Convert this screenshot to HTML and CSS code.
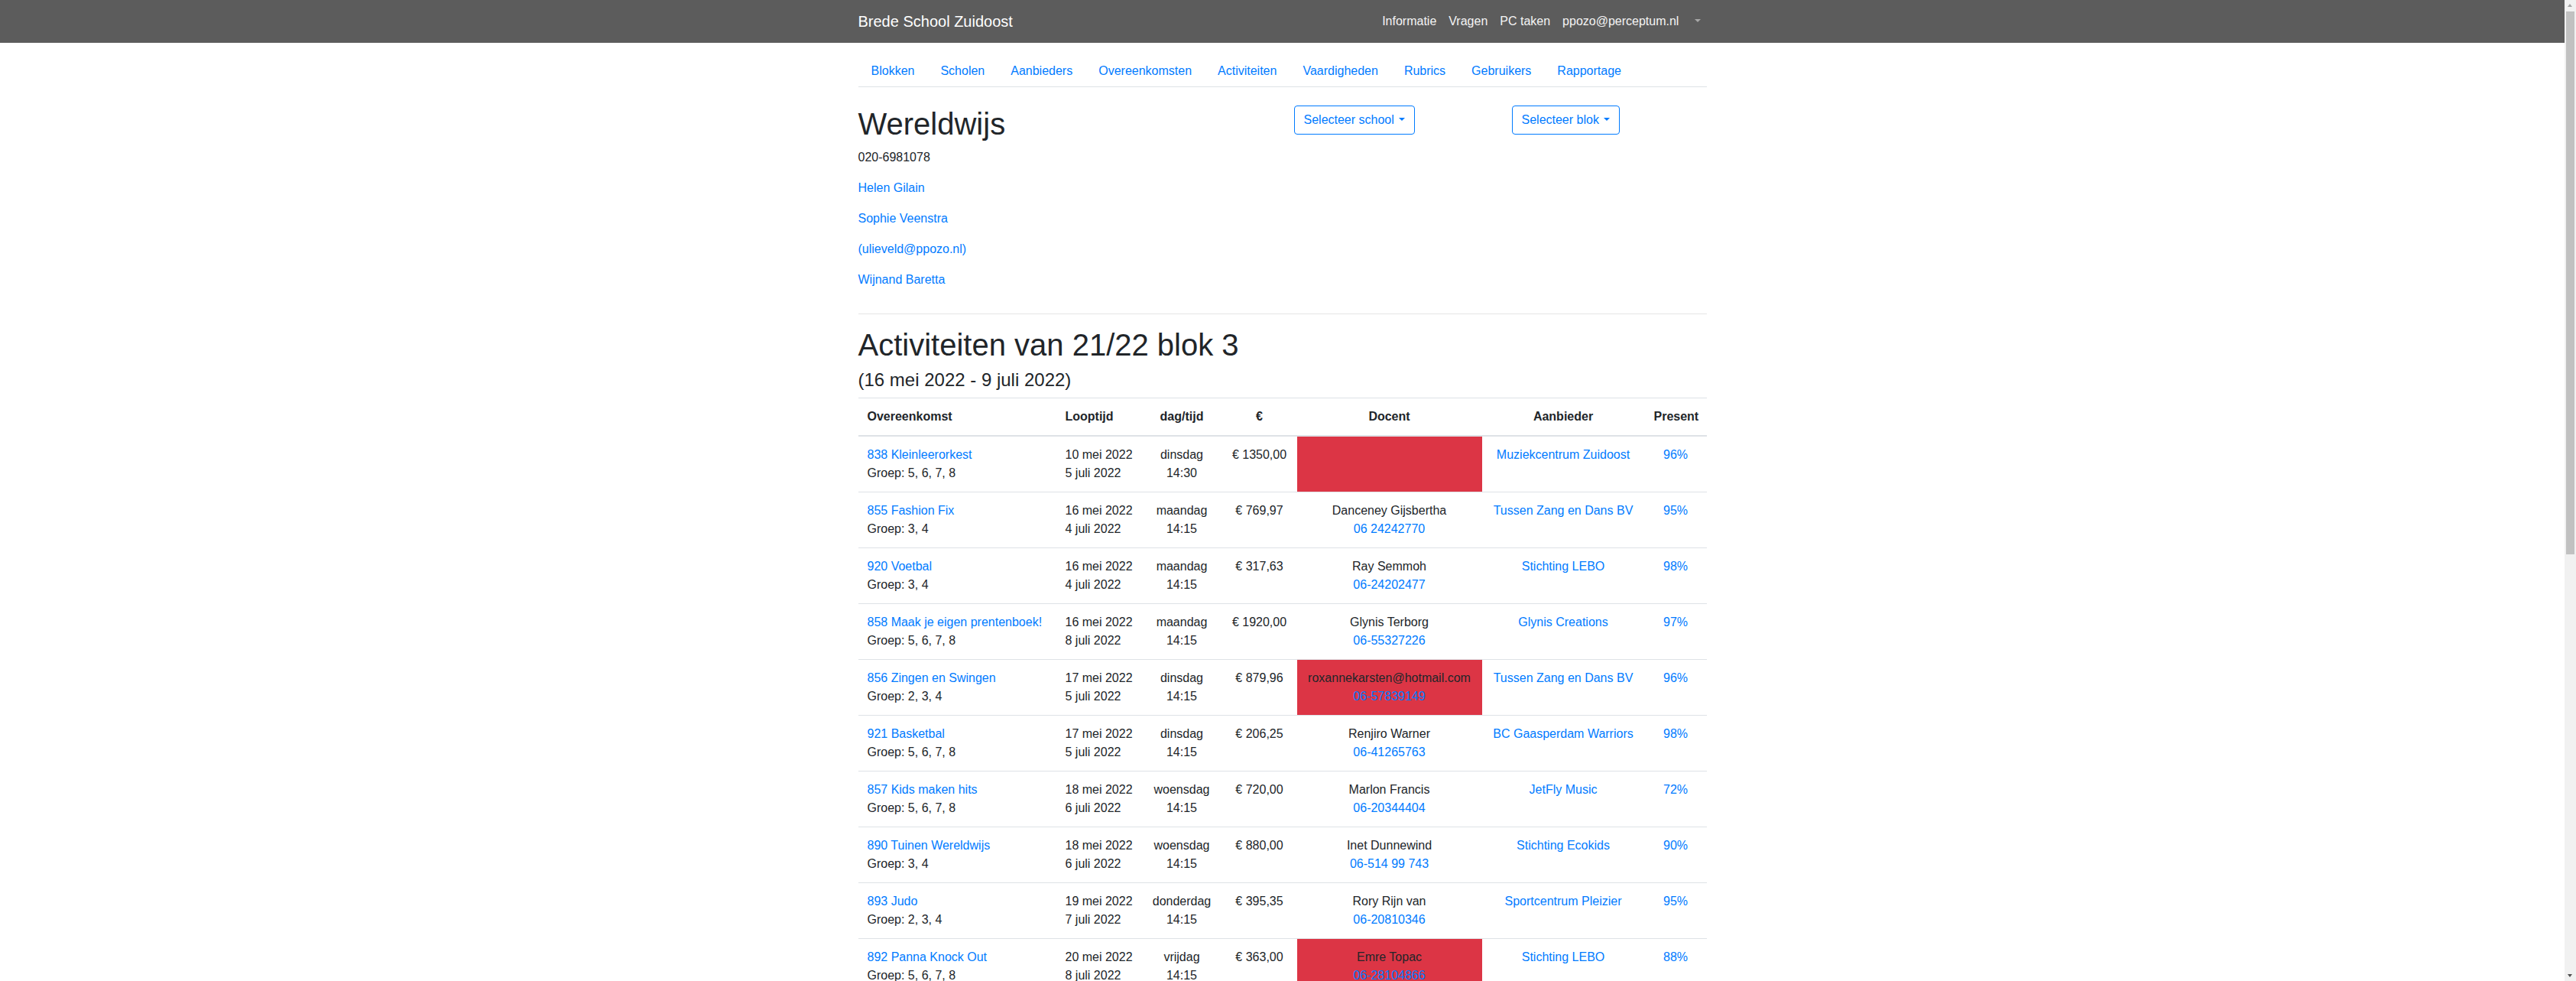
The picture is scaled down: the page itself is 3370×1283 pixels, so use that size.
FILE: index.html
```html
<!DOCTYPE html>
<html lang="nl">
<head>
<meta charset="utf-8">
<title>Brede School Zuidoost</title>
<link rel="stylesheet" href="styles.css">
</head>
<body>
<header class="navbar">
  <div class="container navbar-inner">
    <a class="brand" href="#">Brede School Zuidoost</a>
    <nav class="topnav">
      <a class="top-link" href="#">Informatie</a>
      <a class="top-link" href="#">Vragen</a>
      <a class="top-link" href="#">PC taken</a>
      <a class="top-link" href="#">ppozo@perceptum.nl</a>
      <a class="top-link top-caret" href="#"></a>
    </nav>
  </div>
</header>

<main class="container">
  <ul class="tabs">
    <li><a class="tab-link" href="#">Blokken</a></li>
    <li><a class="tab-link" href="#">Scholen</a></li>
    <li><a class="tab-link" href="#">Aanbieders</a></li>
    <li><a class="tab-link" href="#">Overeenkomsten</a></li>
    <li><a class="tab-link" href="#">Activiteiten</a></li>
    <li><a class="tab-link" href="#">Vaardigheden</a></li>
    <li><a class="tab-link" href="#">Rubrics</a></li>
    <li><a class="tab-link" href="#">Gebruikers</a></li>
    <li><a class="tab-link" href="#">Rapportage</a></li>
  </ul>

  <div class="row">
    <div class="col col-half">
      <h1 class="title">Wereldwijs</h1>
      <p class="para">020-6981078</p>
      <p class="para"><a href="#">Helen Gilain</a></p>
      <p class="para"><a href="#">Sophie Veenstra</a></p>
      <p class="para"><a href="#">(ulieveld@ppozo.nl)</a></p>
      <p class="para"><a href="#">Wijnand Baretta</a></p>
    </div>
    <div class="col col-quarter">
      <button class="btn-outline caret">Selecteer school</button>
    </div>
    <div class="col col-quarter">
      <button class="btn-outline caret">Selecteer blok</button>
    </div>
  </div>

  <hr class="divider">

  <h1 class="title">Activiteiten van 21/22 blok 3</h1>
  <h4 class="subtitle">(16 mei 2022 - 9 juli 2022)</h4>

  <table class="table">
    <colgroup>
      <col class="w1"><col class="w2"><col class="w3"><col class="w4"><col class="w5"><col class="w6"><col class="w7">
    </colgroup>
    <thead>
      <tr>
        <th>Overeenkomst</th>
        <th>Looptijd</th>
        <th class="center">dag/tijd</th>
        <th class="center">€</th>
        <th class="center">Docent</th>
        <th class="center">Aanbieder</th>
        <th class="center">Present</th>
      </tr>
    </thead>
    <tbody>
      <tr>
        <td><a href="#">838 Kleinleerorkest</a><br>Groep: 5, 6, 7, 8</td>
        <td>10 mei 2022<br>5 juli 2022</td>
        <td class="center">dinsdag<br>14:30</td>
        <td class="center">€ 1350,00</td>
        <td class="center danger"></td>
        <td class="center"><a href="#">Muziekcentrum Zuidoost</a></td>
        <td class="center"><a href="#">96%</a></td>
      </tr>
      <tr>
        <td><a href="#">855 Fashion Fix</a><br>Groep: 3, 4</td>
        <td>16 mei 2022<br>4 juli 2022</td>
        <td class="center">maandag<br>14:15</td>
        <td class="center">€ 769,97</td>
        <td class="center">Danceney Gijsbertha<br><a href="#">06 24242770</a></td>
        <td class="center"><a href="#">Tussen Zang en Dans BV</a></td>
        <td class="center"><a href="#">95%</a></td>
      </tr>
      <tr>
        <td><a href="#">920 Voetbal</a><br>Groep: 3, 4</td>
        <td>16 mei 2022<br>4 juli 2022</td>
        <td class="center">maandag<br>14:15</td>
        <td class="center">€ 317,63</td>
        <td class="center">Ray Semmoh<br><a href="#">06-24202477</a></td>
        <td class="center"><a href="#">Stichting LEBO</a></td>
        <td class="center"><a href="#">98%</a></td>
      </tr>
      <tr>
        <td><a href="#">858 Maak je eigen prentenboek!</a><br>Groep: 5, 6, 7, 8</td>
        <td>16 mei 2022<br>8 juli 2022</td>
        <td class="center">maandag<br>14:15</td>
        <td class="center">€ 1920,00</td>
        <td class="center">Glynis Terborg<br><a href="#">06-55327226</a></td>
        <td class="center"><a href="#">Glynis Creations</a></td>
        <td class="center"><a href="#">97%</a></td>
      </tr>
      <tr>
        <td><a href="#">856 Zingen en Swingen</a><br>Groep: 2, 3, 4</td>
        <td>17 mei 2022<br>5 juli 2022</td>
        <td class="center">dinsdag<br>14:15</td>
        <td class="center">€ 879,96</td>
        <td class="center danger">roxannekarsten@hotmail.com<br><a href="#">06-57839149</a></td>
        <td class="center"><a href="#">Tussen Zang en Dans BV</a></td>
        <td class="center"><a href="#">96%</a></td>
      </tr>
      <tr>
        <td><a href="#">921 Basketbal</a><br>Groep: 5, 6, 7, 8</td>
        <td>17 mei 2022<br>5 juli 2022</td>
        <td class="center">dinsdag<br>14:15</td>
        <td class="center">€ 206,25</td>
        <td class="center">Renjiro Warner<br><a href="#">06-41265763</a></td>
        <td class="center"><a href="#">BC Gaasperdam Warriors</a></td>
        <td class="center"><a href="#">98%</a></td>
      </tr>
      <tr>
        <td><a href="#">857 Kids maken hits</a><br>Groep: 5, 6, 7, 8</td>
        <td>18 mei 2022<br>6 juli 2022</td>
        <td class="center">woensdag<br>14:15</td>
        <td class="center">€ 720,00</td>
        <td class="center">Marlon Francis<br><a href="#">06-20344404</a></td>
        <td class="center"><a href="#">JetFly Music</a></td>
        <td class="center"><a href="#">72%</a></td>
      </tr>
      <tr>
        <td><a href="#">890 Tuinen Wereldwijs</a><br>Groep: 3, 4</td>
        <td>18 mei 2022<br>6 juli 2022</td>
        <td class="center">woensdag<br>14:15</td>
        <td class="center">€ 880,00</td>
        <td class="center">Inet Dunnewind<br><a href="#">06-514 99 743</a></td>
        <td class="center"><a href="#">Stichting Ecokids</a></td>
        <td class="center"><a href="#">90%</a></td>
      </tr>
      <tr>
        <td><a href="#">893 Judo</a><br>Groep: 2, 3, 4</td>
        <td>19 mei 2022<br>7 juli 2022</td>
        <td class="center">donderdag<br>14:15</td>
        <td class="center">€ 395,35</td>
        <td class="center">Rory Rijn van<br><a href="#">06-20810346</a></td>
        <td class="center"><a href="#">Sportcentrum Pleizier</a></td>
        <td class="center"><a href="#">95%</a></td>
      </tr>
      <tr>
        <td><a href="#">892 Panna Knock Out</a><br>Groep: 5, 6, 7, 8</td>
        <td>20 mei 2022<br>8 juli 2022</td>
        <td class="center">vrijdag<br>14:15</td>
        <td class="center">€ 363,00</td>
        <td class="center danger">Emre Topac<br><a href="#">06-28104866</a></td>
        <td class="center"><a href="#">Stichting LEBO</a></td>
        <td class="center"><a href="#">88%</a></td>
      </tr>
      <tr>
        <td><a href="#">894 Schaken</a><br>Groep: 5, 6, 7, 8</td>
        <td>20 mei 2022<br>8 juli 2022</td>
        <td class="center">vrijdag<br>14:15</td>
        <td class="center">€ 412,50</td>
        <td class="center">Peter Smit<br><a href="#">06-12345678</a></td>
        <td class="center"><a href="#">Schaakschool Zuidoost</a></td>
        <td class="center"><a href="#">93%</a></td>
      </tr>
      <tr>
        <td><a href="#">895 Koken</a><br>Groep: 3, 4</td>
        <td>23 mei 2022<br>4 juli 2022</td>
        <td class="center">maandag<br>14:15</td>
        <td class="center">€ 540,00</td>
        <td class="center">Anouk Bakker<br><a href="#">06-23456789</a></td>
        <td class="center"><a href="#">Kookstudio Bijlmer</a></td>
        <td class="center"><a href="#">91%</a></td>
      </tr>
      <tr>
        <td><a href="#">896 Toneel</a><br>Groep: 5, 6, 7, 8</td>
        <td>24 mei 2022<br>5 juli 2022</td>
        <td class="center">dinsdag<br>14:15</td>
        <td class="center">€ 690,00</td>
        <td class="center">Mirjam de Vries<br><a href="#">06-34567890</a></td>
        <td class="center"><a href="#">Tussen Zang en Dans BV</a></td>
        <td class="center"><a href="#">94%</a></td>
      </tr>
      <tr>
        <td><a href="#">897 Streetdance</a><br>Groep: 5, 6, 7, 8</td>
        <td>25 mei 2022<br>6 juli 2022</td>
        <td class="center">woensdag<br>14:15</td>
        <td class="center">€ 720,00</td>
        <td class="center">Kevin Martina<br><a href="#">06-45678901</a></td>
        <td class="center"><a href="#">JetFly Music</a></td>
        <td class="center"><a href="#">89%</a></td>
      </tr>
      <tr>
        <td><a href="#">898 Zwemmen</a><br>Groep: 3, 4</td>
        <td>25 mei 2022<br>6 juli 2022</td>
        <td class="center">woensdag<br>14:15</td>
        <td class="center">€ 950,00</td>
        <td class="center">Sandra Pinas<br><a href="#">06-56789012</a></td>
        <td class="center"><a href="#">Sportcentrum Pleizier</a></td>
        <td class="center"><a href="#">97%</a></td>
      </tr>
      <tr>
        <td><a href="#">899 Tekenen en Schilderen</a><br>Groep: 2, 3, 4</td>
        <td>26 mei 2022<br>7 juli 2022</td>
        <td class="center">donderdag<br>14:15</td>
        <td class="center">€ 480,00</td>
        <td class="center">Lisa Jansen<br><a href="#">06-67890123</a></td>
        <td class="center"><a href="#">Glynis Creations</a></td>
        <td class="center"><a href="#">92%</a></td>
      </tr>
      <tr>
        <td><a href="#">900 Tafeltennis</a><br>Groep: 5, 6, 7, 8</td>
        <td>27 mei 2022<br>8 juli 2022</td>
        <td class="center">vrijdag<br>14:15</td>
        <td class="center">€ 310,00</td>
        <td class="center">Rob Kok<br><a href="#">06-78901234</a></td>
        <td class="center"><a href="#">Stichting LEBO</a></td>
        <td class="center"><a href="#">86%</a></td>
      </tr>
      <tr>
        <td><a href="#">901 Natuurlab</a><br>Groep: 3, 4</td>
        <td>30 mei 2022<br>4 juli 2022</td>
        <td class="center">maandag<br>14:15</td>
        <td class="center">€ 600,00</td>
        <td class="center">Inet Dunnewind<br><a href="#">06-514 99 743</a></td>
        <td class="center"><a href="#">Stichting Ecokids</a></td>
        <td class="center"><a href="#">95%</a></td>
      </tr>
      <tr>
        <td><a href="#">902 Drumles</a><br>Groep: 5, 6, 7, 8</td>
        <td>31 mei 2022<br>5 juli 2022</td>
        <td class="center">dinsdag<br>14:15</td>
        <td class="center">€ 825,00</td>
        <td class="center">Marlon Francis<br><a href="#">06-20344404</a></td>
        <td class="center"><a href="#">Muziekcentrum Zuidoost</a></td>
        <td class="center"><a href="#">90%</a></td>
      </tr>
      <tr>
        <td><a href="#">903 Voetbal</a><br>Groep: 5, 6, 7, 8</td>
        <td>1 juni 2022<br>6 juli 2022</td>
        <td class="center">woensdag<br>14:15</td>
        <td class="center">€ 317,63</td>
        <td class="center">Ray Semmoh<br><a href="#">06-24202477</a></td>
        <td class="center"><a href="#">Stichting LEBO</a></td>
        <td class="center"><a href="#">96%</a></td>
      </tr>
    </tbody>
  </table>
</main>

<div class="scrollbar" aria-hidden="true">
  <span class="scroll-arrow scroll-up"></span>
  <span class="scroll-thumb"></span>
  <span class="scroll-arrow scroll-down"></span>
</div>
</body>
</html>
```

FILE: styles.css
```css
* {
  box-sizing: border-box;
}

html, body {
  margin: 0;
  padding: 0;
}

body {
  font-family: "Liberation Sans", Arial, sans-serif;
  font-size: 16px;
  line-height: 1.5;
  color: #212529;
  background: #fff;
  padding-right: 15px;
}

a {
  color: #007bff;
  text-decoration: none;
}

.container {
  width: 100%;
  max-width: 1140px;
  margin: 0 auto;
  padding: 0 15px;
}

/* Top navbar */
.navbar {
  background: #5c5c5c;
  padding: 8px 0;
  height: 56px;
}

.navbar-inner {
  display: flex;
  align-items: center;
  justify-content: space-between;
}

.brand {
  color: #fff;
  font-size: 20px;
  line-height: 30px;
  padding: 5px 0;
  white-space: nowrap;
}

.topnav {
  display: flex;
  align-items: center;
}

.top-link {
  color: #f4f4f4;
  padding: 8px;
  line-height: 24px;
}

.top-caret {
  padding-right: 8px;
}

.top-caret::after {
  content: "";
  display: inline-block;
  margin-left: 0.255em;
  vertical-align: 0.255em;
  border-top: 0.3em solid #a8a8a8;
  border-right: 0.3em solid transparent;
  border-left: 0.3em solid transparent;
}

/* Tabs */
.tabs {
  list-style: none;
  margin: 16px 0 0;
  padding: 0;
  display: flex;
  border-bottom: 1px solid #dee2e6;
}

.tab-link {
  display: block;
  padding: 8px 16px;
  border: 1px solid transparent;
  margin-bottom: -1px;
}

/* Top row */
.row {
  display: flex;
  margin: 24px -15px 0;
}

.col {
  padding: 0 15px;
}

.col-half {
  flex: 0 0 50%;
  max-width: 50%;
}

.col-quarter {
  flex: 0 0 25%;
  max-width: 25%;
}

.title {
  font-size: 40px;
  font-weight: 500;
  line-height: 1.2;
  margin: 0 0 8px;
}

.subtitle {
  font-size: 24px;
  font-weight: 500;
  line-height: 1.2;
  margin: 0 0 8px;
}

.para {
  margin: 0 0 16px;
}

.btn-outline {
  display: inline-block;
  font-family: inherit;
  font-size: 16px;
  line-height: 1.5;
  padding: 6px 12px;
  color: #007bff;
  background: transparent;
  border: 1px solid #007bff;
  border-radius: 4px;
  cursor: pointer;
}

.caret::after {
  content: "";
  display: inline-block;
  margin-left: 0.4em;
  vertical-align: 0.255em;
  border-top: 0.3em solid;
  border-right: 0.3em solid transparent;
  border-left: 0.3em solid transparent;
}

.divider {
  margin: 16px 0;
  border: 0;
  border-top: 1px solid rgba(0, 0, 0, 0.1);
}

/* Table */
.table {
  width: 100%;
  border-collapse: collapse;
  table-layout: fixed;
  margin-bottom: 16px;
}

.w1 { width: 259px; }
.w2 { width: 112px; }
.w3 { width: 105px; }
.w4 { width: 98px; }
.w5 { width: 242px; }
.w6 { width: 213px; }
.w7 { width: 81px; }

.table th,
.table td {
  padding: 12px;
  border-top: 1px solid #dee2e6;
  vertical-align: top;
  text-align: left;
  white-space: nowrap;
}

.table thead th {
  vertical-align: bottom;
  border-bottom: 2px solid #dee2e6;
  font-weight: 700;
}

.table .center {
  text-align: center;
}

.table td.danger {
  background: #dc3545;
}

/* Emulated browser scrollbar */
.scrollbar {
  position: fixed;
  top: 0;
  right: 0;
  width: 15px;
  height: 100vh;
  background: #f1f1f1;
}

.scroll-thumb {
  position: absolute;
  left: 2px;
  right: 2px;
  top: 15px;
  height: 710px;
  background: #c1c1c1;
}

.scroll-arrow {
  position: absolute;
  left: 4px;
  width: 0;
  height: 0;
  border-left: 3.5px solid transparent;
  border-right: 3.5px solid transparent;
}

.scroll-up {
  top: 5px;
  border-bottom: 4px solid #a3a3a3;
}

.scroll-down {
  bottom: 5px;
  border-top: 4px solid #505050;
}
```
